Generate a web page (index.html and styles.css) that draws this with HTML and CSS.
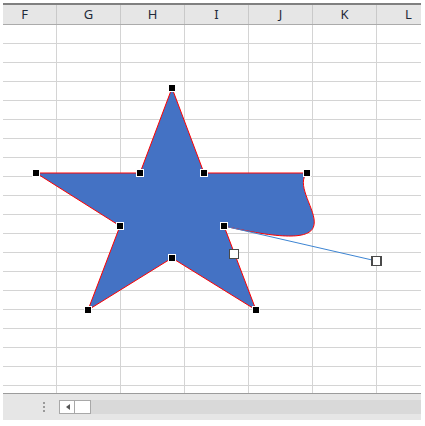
FILE: index.html
```html
<!DOCTYPE html>
<html>
<head>
<meta charset="utf-8">
<link rel="stylesheet" href="styles.css">
</head>
<body>
<div class="sheet">
  <div class="grid">
    <div class="strip">
      <div class="hdr"><span>F</span><span>G</span><span>H</span><span>I</span><span>J</span><span>K</span><span>L</span></div>
      <div class="row"><i></i><i></i><i></i><i></i><i></i><i></i><i></i></div>
      <div class="row"><i></i><i></i><i></i><i></i><i></i><i></i><i></i></div>
      <div class="row"><i></i><i></i><i></i><i></i><i></i><i></i><i></i></div>
      <div class="row"><i></i><i></i><i></i><i></i><i></i><i></i><i></i></div>
      <div class="row"><i></i><i></i><i></i><i></i><i></i><i></i><i></i></div>
      <div class="row"><i></i><i></i><i></i><i></i><i></i><i></i><i></i></div>
      <div class="row"><i></i><i></i><i></i><i></i><i></i><i></i><i></i></div>
      <div class="row"><i></i><i></i><i></i><i></i><i></i><i></i><i></i></div>
      <div class="row"><i></i><i></i><i></i><i></i><i></i><i></i><i></i></div>
      <div class="row"><i></i><i></i><i></i><i></i><i></i><i></i><i></i></div>
      <div class="row"><i></i><i></i><i></i><i></i><i></i><i></i><i></i></div>
      <div class="row"><i></i><i></i><i></i><i></i><i></i><i></i><i></i></div>
      <div class="row"><i></i><i></i><i></i><i></i><i></i><i></i><i></i></div>
      <div class="row"><i></i><i></i><i></i><i></i><i></i><i></i><i></i></div>
      <div class="row"><i></i><i></i><i></i><i></i><i></i><i></i><i></i></div>
      <div class="row"><i></i><i></i><i></i><i></i><i></i><i></i><i></i></div>
      <div class="row"><i></i><i></i><i></i><i></i><i></i><i></i><i></i></div>
      <div class="row"><i></i><i></i><i></i><i></i><i></i><i></i><i></i></div>
      <div class="row"><i></i><i></i><i></i><i></i><i></i><i></i><i></i></div>
      <div class="row"><i></i><i></i><i></i><i></i><i></i><i></i><i></i></div>
    </div>
  </div>
  <div class="hscroll">
    <div class="dots"><b></b><b></b><b></b></div>
    <div class="btn prev"><span class="tri"></span></div>
    <div class="btn thumb"></div>
    <div class="track"></div>
  </div>
  <svg class="overlay" width="425" height="426" viewBox="0 0 425 426" xmlns="http://www.w3.org/2000/svg">
    <path d="M172 88 L204 173 L307 173 C285 195 376 261 224 226 L256 310 L172 258 L88 310 L120 226 L36 173 L140 173 Z" fill="#4472c4" stroke="#ff0000" stroke-width="1"/>
    <line x1="224" y1="226" x2="376.5" y2="261" stroke="#3d85d3" stroke-width="1"/>
    <g fill="#ffffff" stroke="#4a4a4a" stroke-width="1.2" shape-rendering="crispEdges">
      <rect x="229.5" y="249.5" width="9" height="9"/>
      <rect x="372" y="256.5" width="9" height="9"/>
    </g>
    <g fill="#000000" stroke="#ffffff" stroke-width="1" shape-rendering="crispEdges">
      <rect x="168.5" y="84.5" width="7" height="7"/>
      <rect x="136.5" y="169.5" width="7" height="7"/>
      <rect x="200.5" y="169.5" width="7" height="7"/>
      <rect x="32.5" y="169.5" width="7" height="7"/>
      <rect x="303.5" y="169.5" width="7" height="7"/>
      <rect x="116.5" y="222.5" width="7" height="7"/>
      <rect x="220.5" y="222.5" width="7" height="7"/>
      <rect x="168.5" y="254.5" width="7" height="7"/>
      <rect x="84.5" y="306.5" width="7" height="7"/>
      <rect x="252.5" y="306.5" width="7" height="7"/>
    </g>
  </svg>
</div>
</body>
</html>
```

FILE: styles.css
```css
html, body {
  margin: 0;
  padding: 0;
  background: #ffffff;
}

body {
  font-family: "Noto Sans", "Open Sans", sans-serif;
}

.sheet {
  position: relative;
  width: 425px;
  height: 426px;
  padding: 3px 4px 6px 3px;
  box-sizing: border-box;
}

.grid {
  width: 418px;
  height: 390px;
  overflow: hidden;
}

.strip {
  margin-left: -10px;
  width: 448px;
}

.hdr {
  display: flex;
  height: 22px;
  box-sizing: border-box;
  border-top: 2px solid #808080;
  border-bottom: 1px solid #ababab;
  background: #e6e6e6;
}

.hdr span {
  flex: 0 0 64px;
  box-sizing: border-box;
  border-right: 1px solid #c9c9c9;
  text-align: center;
  font-size: 13px;
  line-height: 19px;
  color: #1f2a3a;
}

.row {
  display: flex;
  height: 19px;
  box-sizing: border-box;
  border-bottom: 1px solid #d4d4d4;
}

.row i {
  flex: 0 0 64px;
  box-sizing: border-box;
  border-right: 1px solid #d4d4d4;
}

.hscroll {
  display: flex;
  align-items: center;
  width: 418px;
  height: 27px;
  box-sizing: border-box;
  border-top: 1px solid #9c9c9c;
  background: #e6e6e6;
  padding-left: 40px;
}

.dots {
  display: flex;
  flex-direction: column;
  gap: 2px;
  width: 2px;
  margin-top: -1px;
}

.dots b {
  display: block;
  width: 2px;
  height: 2px;
  background: #9a9a9a;
}

.btn {
  height: 14px;
  box-sizing: border-box;
  border: 1px solid #a8a8a8;
  background: #ffffff;
  display: flex;
  align-items: center;
  justify-content: center;
}

.prev {
  width: 16px;
  margin-left: 14px;
}

.thumb {
  width: 16px;
  border-left: none;
}

.tri {
  width: 0;
  height: 0;
  border-top: 3px solid transparent;
  border-bottom: 3px solid transparent;
  border-right: 4px solid #555555;
  margin-left: 1px;
}

.track {
  flex: 1;
  height: 14px;
  background: #d9d9d9;
}

.overlay {
  position: absolute;
  left: 0;
  top: 0;
  pointer-events: none;
}
```
